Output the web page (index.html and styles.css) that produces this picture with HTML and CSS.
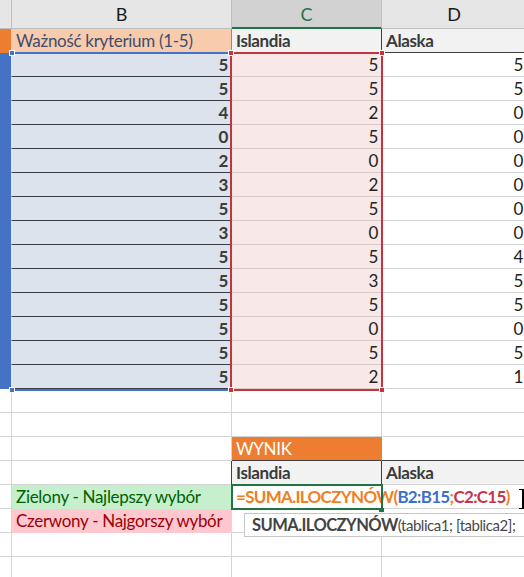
FILE: index.html
```html
<!DOCTYPE html>
<html lang="pl">
<head>
<meta charset="utf-8">
<title>Arkusz</title>
<link rel="stylesheet" href="styles.css">
</head>
<body>
<div class="sheet">
  <div class="grid">
    <div class="cell hd hd-g"></div><div class="cell hd">B</div><div class="cell hd hd-active">C</div><div class="cell hd">D</div>

    <div class="cell g-orange"></div><div class="cell peach">Ważność kryterium (1-5)</div><div class="cell label label-c1">Islandia</div><div class="cell label label-d1">Alaska</div>

    <div class="cell g-blue"></div><div class="cell bsel num">5</div><div class="cell csel num">5</div><div class="cell num">5</div>
    <div class="cell g-blue"></div><div class="cell bsel num">5</div><div class="cell csel num">5</div><div class="cell num">5</div>
    <div class="cell g-blue"></div><div class="cell bsel num">4</div><div class="cell csel num">2</div><div class="cell num">0</div>
    <div class="cell g-blue"></div><div class="cell bsel num">0</div><div class="cell csel num">5</div><div class="cell num">0</div>
    <div class="cell g-blue"></div><div class="cell bsel num">2</div><div class="cell csel num">0</div><div class="cell num">0</div>
    <div class="cell g-blue"></div><div class="cell bsel num">3</div><div class="cell csel num">2</div><div class="cell num">0</div>
    <div class="cell g-blue"></div><div class="cell bsel num">5</div><div class="cell csel num">5</div><div class="cell num">0</div>
    <div class="cell g-blue"></div><div class="cell bsel num">3</div><div class="cell csel num">0</div><div class="cell num">0</div>
    <div class="cell g-blue"></div><div class="cell bsel num">5</div><div class="cell csel num">5</div><div class="cell num">4</div>
    <div class="cell g-blue"></div><div class="cell bsel num">5</div><div class="cell csel num">3</div><div class="cell num">5</div>
    <div class="cell g-blue"></div><div class="cell bsel num">5</div><div class="cell csel num">5</div><div class="cell num">5</div>
    <div class="cell g-blue"></div><div class="cell bsel num">5</div><div class="cell csel num">0</div><div class="cell num">0</div>
    <div class="cell g-blue"></div><div class="cell bsel num">5</div><div class="cell csel num">5</div><div class="cell num">5</div>
    <div class="cell g-blue"></div><div class="cell bsel num">5</div><div class="cell csel num">2</div><div class="cell num">1</div>

    <div class="cell"></div><div class="cell"></div><div class="cell"></div><div class="cell"></div>
    <div class="cell"></div><div class="cell"></div><div class="cell"></div><div class="cell"></div>
    <div class="cell"></div><div class="cell"></div><div class="cell wynik">WYNIK</div><div class="cell dark-bottom"></div>
    <div class="cell"></div><div class="cell dark-right"></div><div class="cell label label-c19">Islandia</div><div class="cell label">Alaska</div>
    <div class="cell"></div><div class="cell good">Zielony - Najlepszy wybór</div>
    <div class="cell active"><span class="formula"><span class="f-op">=SUMA.ILOCZYNÓW(</span><span class="f-b">B2:B15</span><span class="f-op">;</span><span class="f-c">C2:C15</span><span class="f-op">)</span></span></div>
    <div class="cell"></div>
    <div class="cell"></div><div class="cell bad">Czerwony - Najgorszy wybór</div><div class="cell"></div><div class="cell"></div>
    <div class="cell"></div><div class="cell"></div><div class="cell"></div><div class="cell"></div>
    <div class="cell"></div><div class="cell"></div><div class="cell"></div><div class="cell"></div>
  </div>

  <div class="range range-b"></div>
  <div class="range range-c"></div>
  <div class="handle h-blue h-b-tl"></div>
  <div class="handle h-blue h-b-bl"></div>
  <div class="handle h-red h-c-tl"></div>
  <div class="handle h-red h-c-tr"></div>
  <div class="handle h-red h-c-bl"></div>
  <div class="handle h-red h-c-br"></div>

  <div class="caret"></div>
  <div class="tooltip"><b>SUMA.ILOCZYNÓW</b><span class="args">(tablica1; [tablica2];</span></div>
</div>
</body>
</html>
```
FILE: styles.css
```css
html, body {
  margin: 0;
  padding: 0;
  background: #ffffff;
  overflow: hidden;
}

.sheet {
  position: relative;
  width: 524px;
  height: 577px;
  overflow: hidden;
  font-family: "Lato", "Liberation Sans", sans-serif;
  font-size: 17px;
  letter-spacing: -0.3px;
  color: #222222;
}

.grid {
  display: grid;
  grid-template-columns: 12px 220px 150px 145px;
  grid-template-rows: 29px repeat(23, 24px);
  width: 527px;
}

.cell {
  box-sizing: border-box;
  border-right: 1px solid #d4d4d4;
  border-bottom: 1px solid #d4d4d4;
  display: flex;
  align-items: flex-end;
  padding: 0 3px 1px 4px;
  line-height: 20px;
  white-space: nowrap;
  min-width: 0;
}

.num {
  justify-content: flex-end;
}

/* column headers */
.hd {
  background: #e6e6e6;
  border-right-color: #bfbfbf;
  border-bottom-color: #bfbfbf;
  justify-content: center;
  align-items: center;
  padding: 0;
  color: #1a1a1a;
  font-size: 18px;
  letter-spacing: 0;
}
.hd-active {
  background: #d2d2d2;
  color: #217346;
  border-bottom: 2px solid #217346;
}

/* row 1 */
.g-orange {
  background: #ed7d31;
  border-bottom-color: #ed7d31;
}
.peach {
  background: #f8cbad;
  color: #3e4d6e;
  border-right-color: #8c8c8c;
  border-bottom-color: #f8cbad;
}
.label {
  background: #f2f2f2;
  font-weight: 700;
  letter-spacing: -0.4px;
  color: #3a3a3a;
}
.label-c1 {
  border-right-color: #404040;
}
.label-d1 {
  border-bottom-color: #404040;
}

/* selected rows */
.g-blue {
  background: #4472c4;
  border-bottom-color: #4472c4;
  border-right-color: #dfe6f1;
}
.bsel {
  background: #dde3ec;
  border-bottom-color: #3a3d44;
  font-weight: 700;
  color: #3a3a3a;
}
.csel {
  background: #f8e8e8;
  border-bottom-color: #dbcaca;
}

/* results table */
.wynik {
  background: #ed7d31;
  color: #ffffff;
  border-right-color: #ed7d31;
  border-bottom-color: #404040;
}
.dark-bottom {
  border-bottom-color: #404040;
}
.dark-right {
  border-right-color: #404040;
}
.label-c19 {
  border-right-color: #404040;
}

.good {
  background: #c6efce;
  color: #006100;
  border-color: #c6efce;
}
.bad {
  background: #ffc7ce;
  color: #9c0006;
  border-color: #ffc7ce;
}

.active {
  position: relative;
  z-index: 2;
  overflow: visible;
  outline: 2px solid #217346;
  outline-offset: -1px;
  background: #ffffff;
}
.active::after {
  content: "";
  position: absolute;
  right: -3px;
  bottom: -4px;
  width: 5px;
  height: 4px;
  background: #217346;
}
.formula {
  font-weight: 700;
  letter-spacing: -0.7px;
}
.f-op { color: #f07f1e; }
.f-b { color: #3d70c9; }
.f-c { color: #c8344a; }

/* overlays: selection ranges and handles */
.range {
  position: absolute;
  box-sizing: border-box;
  border: 2px solid;
  pointer-events: none;
}
.range-b {
  left: 9px;
  top: 52px;
  width: 223px;
  height: 339px;
  border-color: #4472c4;
}
.range-c {
  left: 230px;
  top: 52px;
  width: 153px;
  height: 339px;
  border-color: #c3353d;
}
.handle {
  position: absolute;
  width: 4px;
  height: 4px;
  border: 1px solid #ffffff;
}
.h-blue { background: #4472c4; }
.h-red { background: #c3353d; }
.h-b-tl { left: 9px; top: 50px; }
.h-b-bl { left: 9px; top: 387px; }
.h-c-tl { left: 228px; top: 50px; }
.h-c-tr { left: 379px; top: 50px; }
.h-c-bl { left: 228px; top: 387px; }
.h-c-br { left: 379px; top: 387px; }

.caret {
  position: absolute;
  left: 519px;
  top: 489px;
  width: 3px;
  height: 18px;
  border-top: 1px solid #000000;
  border-bottom: 1px solid #000000;
  border-right: 2px solid #000000;
  z-index: 3;
}

.tooltip {
  position: absolute;
  left: 244px;
  top: 513px;
  width: 300px;
  height: 24px;
  box-sizing: border-box;
  border: 1px solid #c6c6c6;
  background: #ffffff;
  padding: 0 0 0 7px;
  line-height: 22px;
  font-size: 16.5px;
  color: #4a4a4a;
  white-space: nowrap;
  z-index: 3;
}
.tooltip b {
  font-weight: 700;
  letter-spacing: -0.55px;
  color: #444444;
}
.tooltip .args {
  font-size: 15px;
  letter-spacing: -0.45px;
}
```
